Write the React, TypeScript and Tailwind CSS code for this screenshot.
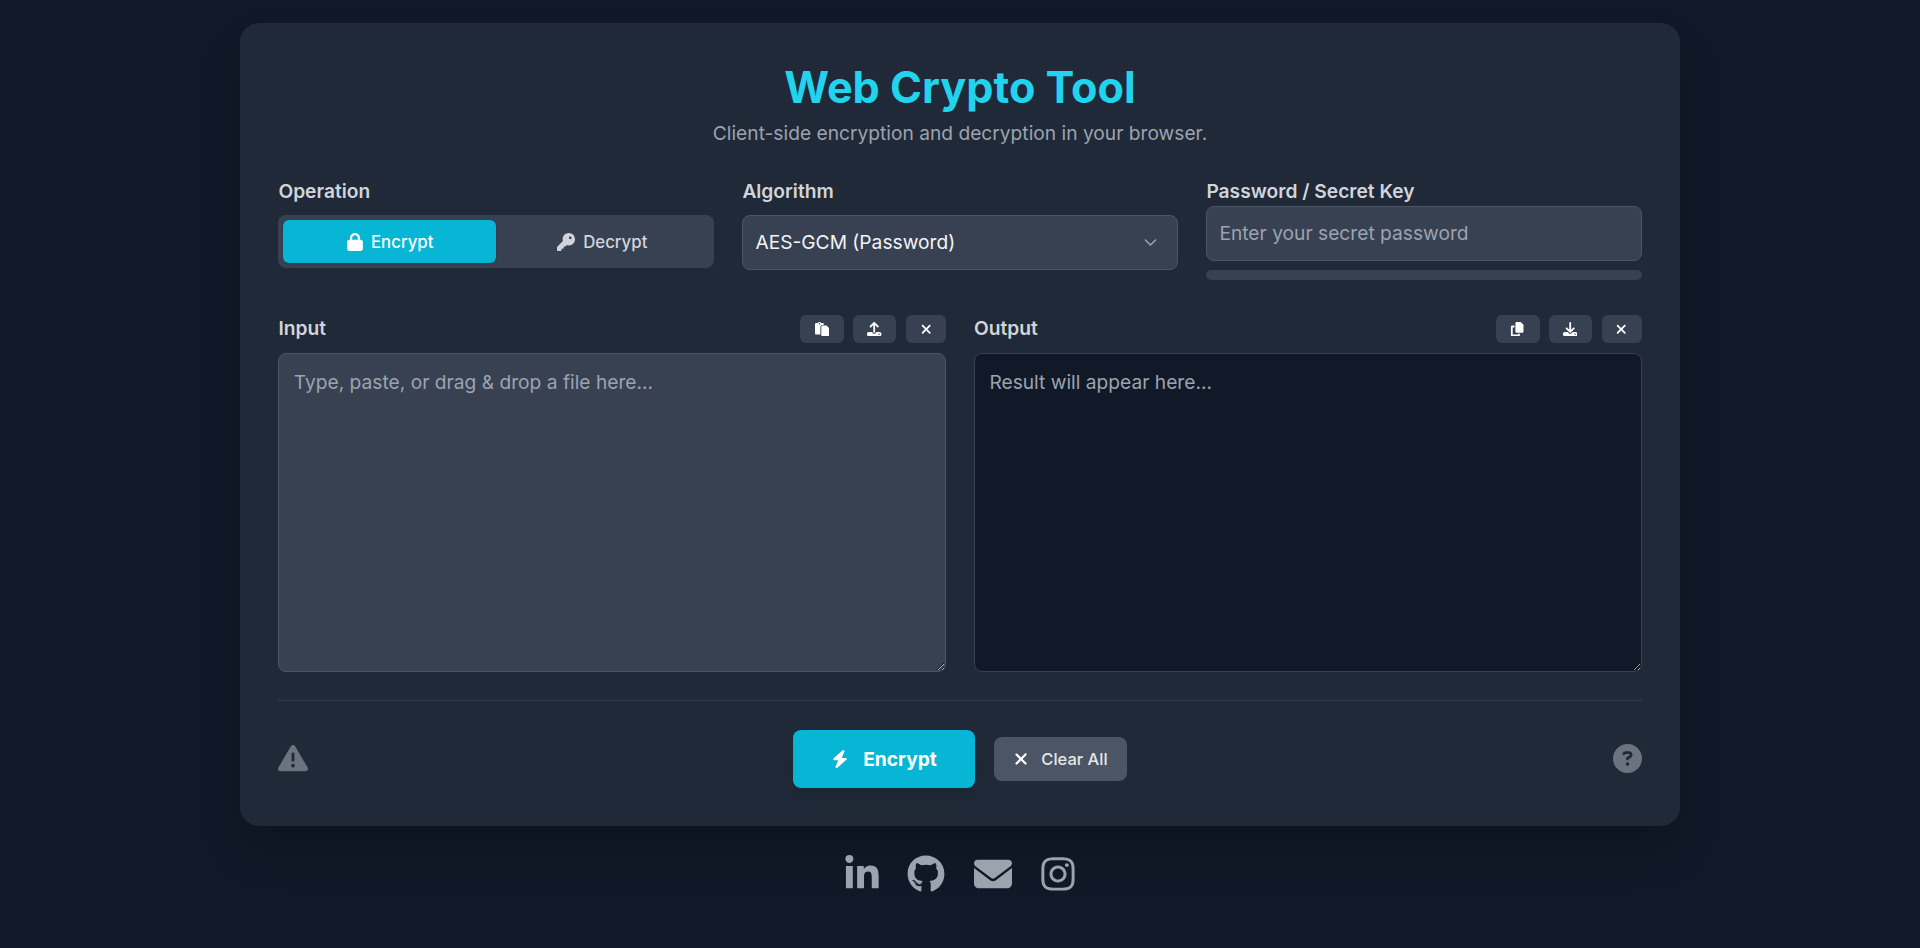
import React from "react";
import {
  FaLock, FaKey, FaPaste, FaUpload, FaXmark, FaCopy, FaDownload, FaBolt,
  FaTriangleExclamation, FaCircleQuestion, FaLinkedinIn, FaGithub, FaEnvelope, FaInstagram,
} from "react-icons/fa6";

function ToolButton({ children, w }: { children: React.ReactNode; w: string }) {
  return (
    <button className={`${w} h-[28px] rounded-md bg-[#374151] flex items-center justify-center text-white text-[14.4px]`}>
      {children}
    </button>
  );
}

export default function App() {
  return (
    <div className="min-h-[948px] bg-[#111827] flex flex-col items-center pt-[23px] font-['Inter',sans-serif]">
      <main className="w-[1440px] h-[803px] bg-[#1f2937] rounded-[19px] px-[38.4px] pt-[32px] shadow-[0_25px_50px_-12px_rgba(0,0,0,0.25)]">
        <header className="flex flex-col items-center">
          <h1 className="text-[43.2px] leading-[64px] font-bold text-[#22d3ee]">Web Crypto Tool</h1>
          <p className="text-[19.2px] leading-[28px] text-[#9ca3af] mb-[1px]">Client-side encryption and decryption in your browser.</p>
        </header>

        <section className="grid grid-cols-3 gap-x-[28.8px] mt-[30px] h-[133px]">
          <div className="flex flex-col">
            <label className="text-[19.2px] leading-[26px] font-semibold text-[#d1d5db] mb-[11px] h-[26px]">Operation</label>
            <div className="h-[53px] rounded-lg bg-[#374151] p-[5px] flex">
              <button className="flex-1 rounded-md bg-[#06b6d4] text-white text-[16.8px] leading-[26px] font-medium flex items-center justify-center gap-[7px] shadow-sm">
                <FaLock className="text-[18px]" /> <span className="relative top-[0.5px]">Encrypt</span>
              </button>
              <button className="flex-1 rounded-md text-[#d1d5db] text-[16.8px] leading-[26px] font-medium flex items-center justify-center gap-[8px]">
                <FaKey className="text-[18px]" /> <span className="relative top-[0.5px]">Decrypt</span>
              </button>
            </div>
          </div>

          <div className="flex flex-col">
            <label className="text-[19.2px] leading-[26px] font-semibold text-[#d1d5db] mb-[11px] h-[26px]">Algorithm</label>
            <div className="relative">
              <select className="w-full h-[55px] appearance-none rounded-lg bg-[#374151] border border-[#4b5563] px-[12px] text-[19.2px] text-[#f3f4f6] outline-none">
                <option>AES-GCM (Password)</option>
              </select>
              <svg className="absolute right-[19px] top-[19px] w-[17px] h-[17px] pointer-events-none" viewBox="0 0 20 20" fill="none" stroke="#9ca3af" strokeWidth="1.8" strokeLinecap="round" strokeLinejoin="round">
                <path d="M4 7l6 6 6-6" />
              </svg>
            </div>
          </div>

          <div className="flex flex-col">
            <label className="text-[19.2px] leading-[26px] font-semibold text-[#d1d5db] h-[26px] mb-[2px]">Password / Secret Key</label>
            <input
              type="password"
              placeholder="Enter your secret password"
              className="w-full h-[55px] rounded-lg bg-[#374151] border border-[#4b5563] px-[12px] pb-[2px] text-[19.2px] text-[#f3f4f6] placeholder:text-[#9ca3af] outline-none"
            />
            <div className="h-[10px] rounded-full bg-[#374151] mt-[9px]" />
          </div>
        </section>

        <section className="grid grid-cols-2 gap-x-[28px] mt-[4px]">
          <div className="flex flex-col">
            <div className="flex items-center justify-between h-[28px] mb-[10px]">
              <label className="text-[19.2px] font-semibold text-[#d1d5db] pb-[2px]">Input</label>
              <div className="flex gap-[9px]">
                <ToolButton w="w-[44px]"><FaPaste /></ToolButton>
                <ToolButton w="w-[43px]"><FaUpload /></ToolButton>
                <ToolButton w="w-[40px] ml-[1px]"><FaXmark /></ToolButton>
              </div>
            </div>
            <textarea
              placeholder="Type, paste, or drag & drop a file here..."
              className="w-full h-[319px] rounded-lg bg-[#374151] border border-[#4b5563] px-[14.4px] pt-[14px] pb-[13px] text-[19.2px] leading-[29px] text-[#f3f4f6] placeholder:text-[#9ca3af] outline-none [color-scheme:dark]"
            />
          </div>
          <div className="flex flex-col">
            <div className="flex items-center justify-between h-[28px] mb-[10px]">
              <label className="text-[19.2px] font-semibold text-[#d1d5db] pb-[2px]">Output</label>
              <div className="flex gap-[9px]">
                <ToolButton w="w-[44px]"><FaCopy /></ToolButton>
                <ToolButton w="w-[43px]"><FaDownload /></ToolButton>
                <ToolButton w="w-[40px] ml-[1px]"><FaXmark /></ToolButton>
              </div>
            </div>
            <textarea
              readOnly
              placeholder="Result will appear here..."
              className="w-full h-[319px] rounded-lg bg-[#111827] border border-[#374151] px-[14.4px] pt-[14px] pb-[13px] text-[19.2px] leading-[29px] text-[#f3f4f6] placeholder:text-[#9ca3af] outline-none [color-scheme:dark]"
            />
          </div>
        </section>

        <footer className="mt-[28px] border-t border-[#2f3b4b] pt-[29px] flex items-center justify-between">
          <FaTriangleExclamation className="text-[#6b7280] text-[30px] mb-[2px] -mr-[1px]" />
          <div className="flex items-center gap-[19px]">
            <button className="w-[182px] h-[58px] rounded-lg bg-[#06b6d4] text-white text-[19.2px] font-bold flex items-center justify-center gap-[14px] shadow-[0_10px_15px_-3px_rgba(0,0,0,0.1)]">
              <FaBolt className="text-[18px]" /> Encrypt
            </button>
            <button className="w-[133px] h-[44px] rounded-lg bg-[#4b5563] text-[#e5e7eb] text-[16.5px] leading-[26px] font-medium flex items-center justify-center gap-[11px] pr-[1px]">
              <FaXmark className="text-[18px] text-white" /> Clear All
            </button>
          </div>
          <FaCircleQuestion className="text-[#6b7280] text-[29px] mb-[2px]" />
        </footer>
      </main>

      <nav className="flex items-center justify-center mt-[29px] text-[#9ca3af] text-[38px]">
        <FaLinkedinIn />
        <FaGithub className="ml-[26px]" />
        <FaEnvelope className="ml-[29px]" />
        <FaInstagram className="ml-[27px]" />
      </nav>
    </div>
  );
}
